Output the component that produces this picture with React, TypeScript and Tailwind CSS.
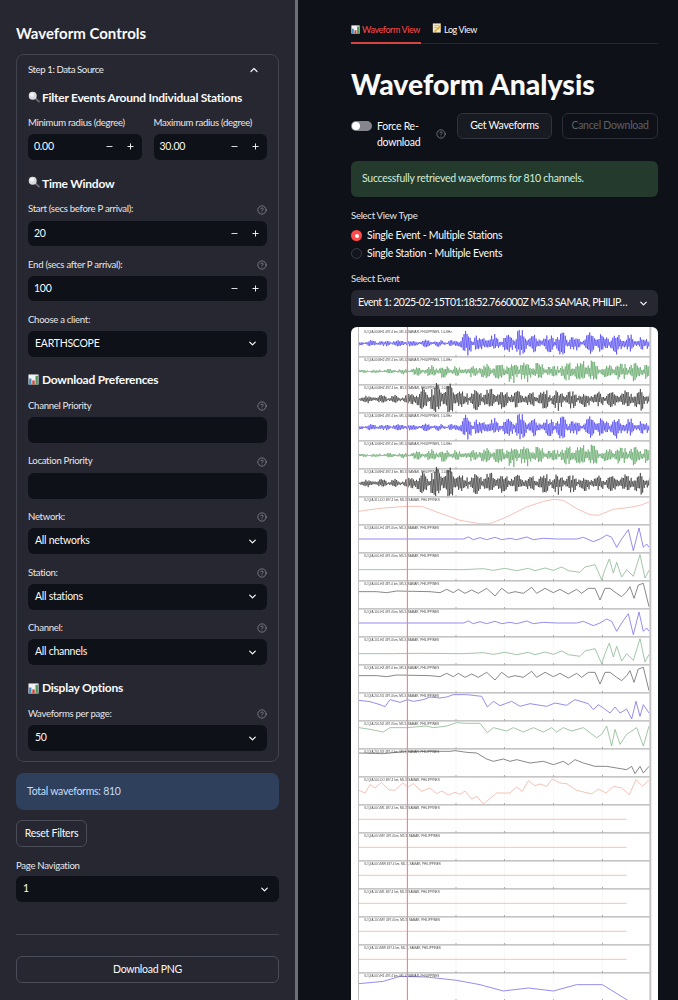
import type { ReactNode } from 'react'
import { ChevronDown, ChevronUp, CircleHelp, Minus, Plus } from 'lucide-react'

type Pt = [number, number]

// all trace coordinates are in 1/3 px units, relative to the row top
const ROW_H = 84
const X0 = 27
const X1 = 900

function mulberry(seed: number) {
  let a = seed
  return () => {
    a = (a + 0x6d2b79f5) | 0
    let t = Math.imul(a ^ (a >>> 15), 1 | a)
    t = (t + Math.imul(t ^ (t >>> 7), 61 | t)) ^ t
    return ((t ^ (t >>> 14)) >>> 0) / 4294967296
  }
}

function envelopeAt(env: Pt[], x: number) {
  for (let i = 1; i < env.length; i++) {
    if (x <= env[i][0]) {
      const [x0, y0] = env[i - 1]
      const [x1, y1] = env[i]
      return y0 + ((y1 - y0) * (x - x0)) / (x1 - x0)
    }
  }
  return env[env.length - 1][1]
}

function densePath(env: Pt[], seed: number) {
  const rnd = mulberry(seed)
  const pts: string[] = []
  let sign = 1
  for (let x = X0; x <= X1; x += 2.3) {
    const beat = 0.3 + 0.85 * Math.abs(Math.sin(x / 13 + seed))
    const y = 43 + sign * envelopeAt(env, x) * beat * (0.3 + 0.8 * rnd())
    pts.push(`${x.toFixed(1)},${y.toFixed(1)}`)
    sign = -sign
  }
  return pts.join(' ')
}

const BLUE_ENV: Pt[] = [[27, 8], [320, 9], [330, 22], [345, 40], [370, 28], [420, 24], [470, 20], [505, 40], [540, 24], [580, 18], [620, 32], [650, 26], [690, 20], [735, 30], [770, 24], [800, 30], [860, 24], [903, 20]]
const GREEN_ENV: Pt[] = [[27, 4], [170, 7], [230, 14], [270, 18], [340, 12], [385, 18], [450, 28], [500, 30], [560, 26], [600, 16], [650, 24], [705, 38], [760, 18], [810, 26], [870, 24], [903, 18]]
const BLACK_ENV: Pt[] = [[27, 11], [170, 11], [200, 24], [260, 40], [320, 38], [350, 24], [380, 30], [470, 24], [530, 18], [620, 28], [700, 22], [760, 20], [903, 30]]

const SALMON_1: Pt[] = [[27, 43], [60, 38], [100, 33], [172, 28], [215, 28], [260, 45], [330, 70], [390, 80], [420, 80], [470, 60], [530, 30], [580, 13], [610, 7], [640, 10], [680, 35], [720, 53], [745, 55], [790, 37], [840, 31], [870, 25], [897, 15]]
const LH_BLUE: Pt[] = [[27, 42], [172, 42], [340, 42], [355, 36], [370, 44], [390, 38], [410, 44], [435, 37], [455, 44], [480, 40], [500, 44], [530, 36], [550, 44], [580, 40], [620, 42], [680, 42], [700, 37], [730, 50], [750, 42], [770, 30], [785, 37], [800, 67], [815, 42], [835, 14], [850, 77], [867, 9], [880, 67], [890, 57], [897, 67]]
const LH_GREEN: Pt[] = [[27, 50], [130, 50], [200, 49], [340, 50], [400, 47], [430, 52], [465, 46], [500, 53], [535, 46], [555, 53], [585, 45], [610, 52], [635, 42], [655, 53], [690, 58], [705, 42], [735, 35], [755, 80], [765, 50], [778, 18], [790, 60], [800, 28], [815, 72], [830, 50], [850, 70], [870, 5], [885, 75], [897, 52]]
const LH_BLACK: Pt[] = [[27, 32], [80, 32], [110, 35], [140, 30], [240, 32], [270, 35], [290, 25], [310, 35], [325, 25], [345, 37], [365, 27], [385, 37], [410, 22], [435, 45], [455, 22], [475, 37], [495, 32], [520, 37], [545, 19], [560, 37], [585, 22], [610, 35], [630, 25], [655, 39], [680, 25], [695, 37], [715, 22], [735, 22], [750, 57], [765, 22], [780, 22], [800, 37], [815, 47], [830, 32], [840, 17], [852, 52], [865, 12], [880, 7], [897, 77]]
const BH_BLUE: Pt[] = [[27, 22], [60, 26], [90, 35], [105, 41], [120, 20], [150, 28], [172, 20], [190, 25], [220, 20], [240, 12], [270, 15], [290, 12], [310, 5], [350, 5], [395, 10], [412, 42], [430, 25], [450, 38], [485, 25], [510, 40], [540, 32], [590, 40], [615, 30], [650, 37], [675, 20], [715, 32], [730, 50], [745, 35], [760, 45], [780, 60], [795, 42], [810, 60], [830, 48], [845, 78], [858, 25], [870, 70], [880, 35], [897, 60]]
const BH_GREEN: Pt[] = [[27, 20], [60, 25], [100, 33], [120, 20], [170, 20], [230, 15], [250, 20], [290, 15], [320, 5], [350, 7], [390, 7], [412, 35], [430, 20], [470, 30], [490, 20], [520, 33], [550, 20], [580, 33], [605, 20], [620, 33], [640, 20], [665, 30], [700, 20], [740, 50], [755, 40], [770, 15], [785, 75], [795, 25], [810, 70], [830, 40], [860, 20], [880, 75], [897, 15]]
const BH_BLACK: Pt[] = [[27, 12], [100, 14], [170, 7], [300, 7], [315, 5], [350, 10], [380, 12], [410, 30], [430, 37], [460, 30], [480, 37], [500, 32], [540, 42], [580, 37], [610, 47], [640, 37], [655, 47], [675, 32], [700, 42], [735, 52], [770, 52], [800, 57], [830, 62], [845, 52], [855, 74], [870, 52], [880, 72], [897, 52]]
const SALMON_2: Pt[] = [[27, 40], [45, 48], [60, 23], [75, 33], [95, 16], [115, 38], [135, 40], [158, 18], [175, 30], [190, 20], [215, 43], [240, 33], [260, 50], [275, 42], [295, 54], [315, 46], [330, 52], [345, 42], [365, 66], [380, 58], [400, 81], [440, 48], [480, 48], [500, 30], [517, 43], [535, 11], [555, 26], [570, 21], [590, 28], [607, 6], [630, 18], [650, 20], [680, 40], [725, 51], [745, 36], [768, 48], [790, 28], [815, 33], [838, 53], [858, 8], [878, 28], [897, 8]]
const VH_BLUE: Pt[] = [[27, 32], [100, 25], [150, 10], [230, 12], [320, 22], [390, 35], [460, 54], [535, 45], [610, 54], [680, 35], [757, 35], [830, 80], [903, 125]]
const FLAT: Pt[] = [[27, 43], [830, 43]]

const C_BLUE = '#7a70ec'
const C_GREEN = '#8cb890'
const C_BLACK = '#6a6a6a'
const C_SALMON = '#f2b3a4'

type Row = { label: string; color: string; dense?: Pt[]; seed?: number; pts?: Pt[] }

const LOC = 'M5.3, SAMAR, PHILIPPINES'
const rows: Row[] = [
  { label: `IU.QIA.00.BH1 497.4 km, ${LOC}, 1.0-8Hz`, color: '#2a1ef0', dense: BLUE_ENV, seed: 3 },
  { label: `IU.QIA.00.BH2 497.4 km, ${LOC}, 1.0-8Hz`, color: '#3f9446', dense: GREEN_ENV, seed: 5 },
  { label: `IU.QIA.00.BHZ 497.4 km, ${LOC}, 1.0-8Hz`, color: '#111111', dense: BLACK_ENV, seed: 7 },
  { label: `IU.QIA.10.BH1 497.4 km, ${LOC}, 1.0-8Hz`, color: '#2a1ef0', dense: BLUE_ENV, seed: 3 },
  { label: `IU.QIA.10.BH2 497.4 km, ${LOC}, 1.0-8Hz`, color: '#3f9446', dense: GREEN_ENV, seed: 5 },
  { label: `IU.QIA.10.BHZ 497.4 km, ${LOC}, 1.0-8Hz`, color: '#111111', dense: BLACK_ENV, seed: 7 },
  { label: `IU.QIA.31.LDO 497.4 km, ${LOC}`, color: C_SALMON, pts: SALMON_1 },
  { label: `IU.QIA.00.LH1 497.4 km, ${LOC}`, color: C_BLUE, pts: LH_BLUE },
  { label: `IU.QIA.00.LH2 497.4 km, ${LOC}`, color: C_GREEN, pts: LH_GREEN },
  { label: `IU.QIA.00.LHZ 497.4 km, ${LOC}`, color: C_BLACK, pts: LH_BLACK },
  { label: `IU.QIA.10.LH1 497.4 km, ${LOC}`, color: C_BLUE, pts: LH_BLUE },
  { label: `IU.QIA.10.LH2 497.4 km, ${LOC}`, color: C_GREEN, pts: LH_GREEN },
  { label: `IU.QIA.10.LHZ 497.4 km, ${LOC}`, color: C_BLACK, pts: LH_BLACK },
  { label: `IU.QIA.20.LN1 497.4 km, ${LOC}`, color: C_BLUE, pts: BH_BLUE },
  { label: `IU.QIA.20.LN2 497.4 km, ${LOC}`, color: C_GREEN, pts: BH_GREEN },
  { label: `IU.QIA.20.LNZ 497.4 km, ${LOC}`, color: C_BLACK, pts: BH_BLACK },
  { label: `IU.QIA.50.LDO 497.4 km, ${LOC}`, color: C_SALMON, pts: SALMON_2 },
  { label: `IU.QIA.00.VM1 497.4 km, ${LOC}`, color: C_SALMON, pts: FLAT },
  { label: `IU.QIA.00.VMV 497.4 km, ${LOC}`, color: C_SALMON, pts: FLAT },
  { label: `IU.QIA.00.VMW 497.4 km, ${LOC}`, color: C_SALMON, pts: FLAT },
  { label: `IU.QIA.10.VM1 497.4 km, ${LOC}`, color: C_SALMON, pts: FLAT },
  { label: `IU.QIA.10.VMV 497.4 km, ${LOC}`, color: C_SALMON, pts: FLAT },
  { label: `IU.QIA.10.VMW 497.4 km, ${LOC}`, color: C_SALMON, pts: FLAT },
  { label: `IU.QIA.00.VH1 497.4 km, ${LOC}`, color: C_BLUE, pts: VH_BLUE },
]

const TICKS = [318, 463, 610, 757]

function WaveformPlot() {
  const top = 6
  const height = top + rows.length * ROW_H + 60
  return (
    <svg viewBox={`0 0 921 ${height}`} width={307} height={height / 3} className="block blur-[0.3px]">
      {TICKS.map((t) => (
        <line key={t} x1={t - 3} x2={t - 3} y1={top} y2={height} stroke="#ececec" strokeWidth={1.5} />
      ))}
      {rows.map((row, i) => {
        const y = top + i * ROW_H
        const pts = row.dense
          ? densePath(row.dense, row.seed ?? 1)
          : (row.pts ?? []).map(([x, py]) => `${x},${py}`).join(' ')
        return (
          <g key={i} transform={`translate(-3 ${y})`}>
            <polyline
              points={pts}
              fill="none"
              stroke={row.color}
              strokeWidth={row.dense ? 1.6 : 2.4}
              strokeLinejoin="round"
            />
            <text x={43} y={11} fontSize={9.2} fill="#444" fontFamily="'Liberation Sans', sans-serif">
              {row.label}
            </text>
            <rect x={27} y={ROW_H - 3} width={876} height={5} fill="#c6c6c6" />
            {TICKS.map((t) => (
              <rect key={t} x={t - 1} y={ROW_H - 5} width={2} height={3} fill="#555" />
            ))}
          </g>
        )
      })}
      <rect x={21} y={0} width={3} height={height} fill="#bdbdbd" />
      <rect x={895} y={0} width={6} height={height} fill="#c6c6c6" />
      <rect x={167.5} y={0} width={3.5} height={height} fill="#ee8a80" />
    </svg>
  )
}

function SearchIcon() {
  return (
    <svg viewBox="0 0 12 12" className="w-[12px] h-[12px] shrink-0 -mt-[3px]">
      <line x1="7" y1="7" x2="11" y2="10.6" stroke="#6f7078" strokeWidth="1.7" strokeLinecap="round" />
      <circle cx="4.7" cy="4.7" r="4" fill="#d9dadd" />
      <circle cx="4" cy="3.8" r="2" fill="#f3f3f4" />
    </svg>
  )
}

function ChartIcon({ className }: { className?: string }) {
  return (
    <svg viewBox="0 0 12 12" className={className}>
      <rect x="0.5" y="0.5" width="11" height="11" fill="#f1f2f4" />
      <rect x="1.2" y="5" width="2.6" height="6.5" fill="#3f8fc4" />
      <rect x="4.7" y="7" width="2.6" height="4.5" fill="#d0453a" />
      <rect x="8.2" y="2" width="2.6" height="9.5" fill="#4d9a52" />
    </svg>
  )
}

function MemoIcon() {
  return (
    <svg viewBox="0 0 12 12" className="w-[10px] h-[10px] shrink-0">
      <rect x="1" y="0.5" width="9.5" height="11" fill="#f2e7c4" />
      <line x1="2.5" y1="3" x2="8.5" y2="3" stroke="#a9a39a" strokeWidth="0.8" />
      <line x1="2.5" y1="5.3" x2="7" y2="5.3" stroke="#a9a39a" strokeWidth="0.8" />
      <line x1="3" y1="10.5" x2="10.5" y2="3.5" stroke="#e0a92c" strokeWidth="2" />
    </svg>
  )
}

function Heading({ icon, children, className }: { icon: ReactNode; children: ReactNode; className: string }) {
  return (
    <div className={`flex items-center gap-[2px] h-[16px] whitespace-nowrap text-[12px] tracking-[-0.25px] font-bold text-[#fafafa] ${className}`}>
      {icon}
      <span>{children}</span>
    </div>
  )
}

function Label({ children, help }: { children: ReactNode; help?: boolean }) {
  return (
    <div className="flex items-center justify-between h-[14px] whitespace-nowrap text-[9.6px] tracking-[-0.3px] text-[#e6e6ea]">
      <span>{children}</span>
      {help && <CircleHelp size={10} strokeWidth={1.5} className="text-[#9fa0a8]" />}
    </div>
  )
}

function Stepper({ value }: { value: string }) {
  return (
    <div className="flex items-center h-[25.6px] rounded-md bg-[#0e1117] pl-[6px] pr-[7px] text-[10.5px] tracking-[-0.26px] text-[#fafafa]">
      <span className="flex-1">{value}</span>
      <Minus size={9} strokeWidth={2.5} className="text-[#e6e6ea]" />
      <Plus size={9} strokeWidth={2.5} className="ml-[12px] text-[#f4f4f6]" />
    </div>
  )
}

function SelectBox({ value }: { value: string }) {
  return (
    <div className="flex items-center justify-between h-[26px] rounded-md bg-[#0e1117] pl-[7px] pr-[9px] text-[10.5px] tracking-[-0.26px] text-[#fafafa]">
      <span>{value}</span>
      <ChevronDown size={11} strokeWidth={2.75} />
    </div>
  )
}

function Field({ label, help, children, className = 'mt-[11.6px]' }: { label: string; help?: boolean; children?: ReactNode; className?: string }) {
  return (
    <div className={className}>
      <Label help={help}>{label}</Label>
      <div className="mt-[4px]">{children ?? <div className="h-[26px] rounded-md bg-[#0e1117]" />}</div>
    </div>
  )
}

function Sidebar() {
  return (
    <aside className="w-[295px] h-full shrink-0 bg-[#262730] px-[16px] pt-[23px]">
      <div className="h-[21px] flex items-center text-[15px] font-bold text-[#fafafa]">Waveform Controls</div>
      <div className="mt-[10px] h-[708px] rounded-lg border border-[#41434e] px-[11px]">
        <div className="flex items-center justify-between h-[30px] pr-[1px] pl-0 text-[9.6px] tracking-[-0.4px] text-[#eaeaee]">
          <span>Step 1: Data Source</span>
          <ChevronUp size={12} strokeWidth={2.5} className="mr-[6px]" />
        </div>
        <Heading icon={<SearchIcon />} className="mt-[5px]">Filter Events Around Individual Stations</Heading>
        <div className="mt-[10px] grid grid-cols-2 gap-[12px]">
          <Field label="Minimum radius (degree)" className="">
            <Stepper value="0.00" />
          </Field>
          <Field label="Maximum radius (degree)" className="">
            <Stepper value="30.00" />
          </Field>
        </div>
        <Heading icon={<SearchIcon />} className="mt-[16px]">Time Window</Heading>
        <Field label="Start (secs before P arrival):" help className="mt-[11px]">
          <Stepper value="20" />
        </Field>
        <Field label="End (secs after P arrival):" help>
          <Stepper value="100" />
        </Field>
        <Field label="Choose a client:">
          <SelectBox value="EARTHSCOPE" />
        </Field>
        <Heading icon={<ChartIcon className="w-[11px] h-[11px] shrink-0" />} className="mt-[15px] gap-[3px]">Download Preferences</Heading>
        <Field label="Channel Priority" help className="mt-[11px]" />
        <Field label="Location Priority" help />
        <Field label="Network:" help>
          <SelectBox value="All networks" />
        </Field>
        <Field label="Station:" help>
          <SelectBox value="All stations" />
        </Field>
        <Field label="Channel:" help>
          <SelectBox value="All channels" />
        </Field>
        <Heading icon={<ChartIcon className="w-[11px] h-[11px] shrink-0" />} className="mt-[15px] gap-[3px]">Display Options</Heading>
        <Field label="Waveforms per page:" help className="mt-[11px]">
          <SelectBox value="50" />
        </Field>
      </div>
      <div className="mt-[11px] h-[37px] flex items-center rounded-lg bg-[#2f405c] px-[11px] text-[10.5px] tracking-[-0.26px] text-[#c7dcf5]">Total waveforms: 810</div>
      <div className="mt-[10px] w-[71px] h-[27px] flex items-center justify-center rounded-md border border-[#4a4c57] text-[10.5px] tracking-[-0.26px] text-[#fafafa]">Reset Filters</div>
      <div className="mt-[12px]">
        <Label>Page Navigation</Label>
      </div>
      <div className="mt-[3px]">
        <SelectBox value="1" />
      </div>
      <div className="mt-[32px] h-px bg-[#41434e]" />
      <div className="mt-[21px] h-[27px] flex items-center justify-center rounded-md border border-[#4a4c57] text-[10.5px] tracking-[-0.26px] text-[#fafafa]">Download PNG</div>
    </aside>
  )
}

function MainPanel() {
  return (
    <main className="flex-1 min-w-0 pl-[53px] pr-[20px] pt-[21px]">
      <div className="flex h-[23px] border-b border-[#262730] whitespace-nowrap text-[9px] tracking-[-0.4px]">
        <div className="relative flex items-start gap-[2px] w-[70px] pt-[2px] text-[#ff4b4b]">
          <ChartIcon className="w-[9px] h-[9px] mt-[2px] shrink-0" />
          <span>Waveform View</span>
          <div className="absolute left-0 right-0 -bottom-px h-[2px] bg-[#d6443f]" />
        </div>
        <div className="flex items-start gap-[2px] ml-[11px] pt-[2px] text-[#fafafa]">
          <MemoIcon />
          <span>Log View</span>
        </div>
      </div>
      <h1 className="mt-[22px] h-[36px] flex items-center text-[28.4px] leading-none font-black text-[#fafafa]">Waveform Analysis</h1>
      <div className="mt-[11px] flex items-start h-[48px]">
        <div className="flex items-start w-[106px]">
          <div className="mt-[8px] relative w-[21px] h-[10px] rounded-full bg-[#85868d] shrink-0">
            <div className="absolute left-[1px] top-[1px] w-[8px] h-[8px] rounded-full bg-white" />
          </div>
          <div className="ml-[5px] w-[46px] mt-[5px] text-[10.5px] tracking-[-0.26px] leading-[16px] text-[#fafafa]">Force Re-download</div>
          <CircleHelp size={10} strokeWidth={1.5} className="mt-[16px] ml-[13px] shrink-0 text-[#9fa0a8]" />
        </div>
        <div className="w-[95px] h-[26px] flex items-center justify-center rounded-md border border-[#31333f] bg-[#191b23] text-[10.5px] tracking-[-0.26px] text-[#fafafa]">Get Waveforms</div>
        <div className="ml-[10px] w-[96px] h-[26px] flex items-center justify-center rounded-md border border-[#2b2d37] text-[10.5px] tracking-[-0.26px] text-[#5f6068]">Cancel Download</div>
      </div>
      <div className="h-[36px] flex items-center rounded-md bg-[#233a2d] px-[11px] text-[10.5px] tracking-[-0.26px] text-[#d3ecd9]">Successfully retrieved waveforms for 810 channels.</div>
      <div className="mt-[12px]">
        <Label>Select View Type</Label>
      </div>
      <div className="mt-[4px] flex items-center gap-[5px] h-[17px] text-[10.5px] tracking-[-0.26px] text-[#fafafa]">
        <div className="w-[11px] h-[11px] rounded-full bg-[#ff4b4b] flex items-center justify-center">
          <div className="w-[4px] h-[4px] rounded-full bg-white" />
        </div>
        <span>Single Event - Multiple Stations</span>
      </div>
      <div className="mt-[1px] flex items-center gap-[5px] h-[17px] text-[10.5px] tracking-[-0.26px] text-[#fafafa]">
        <div className="w-[11px] h-[11px] rounded-full bg-[#12151d] border border-[#3a3c47]" />
        <span>Single Station - Multiple Events</span>
      </div>
      <div className="mt-[10px]">
        <Label>Select Event</Label>
      </div>
      <div className="mt-[4px] h-[26px] flex items-center justify-between rounded-md bg-[#262730] pl-[7px] pr-[9px] whitespace-nowrap text-[10.5px] tracking-[-0.55px] text-[#fafafa]">
        <span>Event 1: 2025-02-15T01:18:52.766000Z M5.3 SAMAR, PHILIP…</span>
        <ChevronDown size={11} strokeWidth={2.75} />
      </div>
      <div className="mt-[11px] rounded-t-md bg-white overflow-hidden">
        <WaveformPlot />
      </div>
    </main>
  )
}

export default function App() {
  return (
    <div className="flex h-[1000px] w-[678px] overflow-hidden bg-[#0e1117] font-['Lato',sans-serif]">
      <Sidebar />
      <div className="w-[3px] shrink-0 bg-[#6e6f77]" />
      <MainPanel />
    </div>
  )
}
